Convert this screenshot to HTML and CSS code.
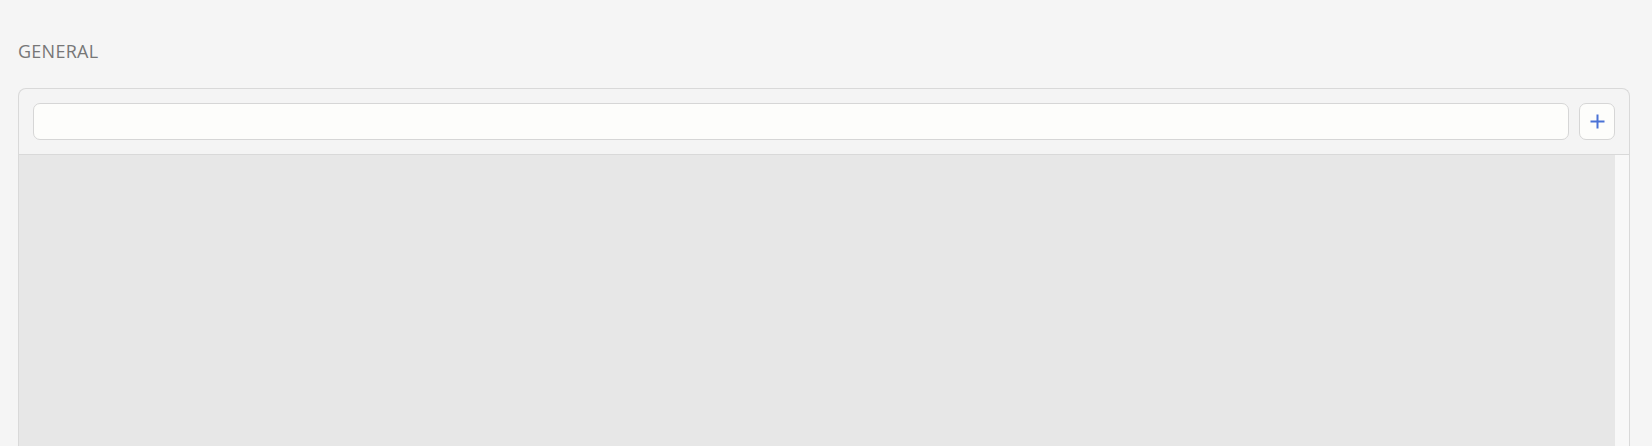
FILE: index.html
```html
<!DOCTYPE html>
<html lang="en">
<head>
    <meta charset="UTF-8">
    <meta name="viewport" content="width=device-width, initial-scale=1.0">
    <title>General</title>
    <link rel="stylesheet" href="styles.css">
</head>
<body>
    <main class="page">
        <h2 class="section-title">GENERAL</h2>

        <section class="panel">
            <div class="panel-header">
                <input type="text" class="search-input" aria-label="Name">
                <button type="button" class="add-button" aria-label="Add">
                    <svg width="15" height="15" viewBox="0 0 15 15">
                        <path d="M7.5 0.5v14M0.5 7.5h14" stroke="#4a72d6" stroke-width="2" fill="none"/>
                    </svg>
                </button>
            </div>
            <div class="panel-body">
                <div class="list-area"></div>
                <div class="scroll-track"></div>
            </div>
        </section>
    </main>
</body>
</html>
```

FILE: styles.css
```css
html, body {
    height: 100%;
}

body {
    font-family: "Open Sans", "Noto Sans", Arial, sans-serif;
    margin: 0;
    padding: 0;
    background-color: #f5f5f5;
    overflow: hidden;
}

.page {
    padding: 39px 22px 0 18px;
    display: flex;
    flex-direction: column;
    height: 100%;
    box-sizing: border-box;
}

.section-title {
    margin: 0 0 25px 0;
    font-size: 18px;
    line-height: 24px;
    font-weight: 400;
    letter-spacing: 0.25px;
    color: #777777;
}

.panel {
    flex: 1;
    display: flex;
    flex-direction: column;
    background: #f4f4f4;
    border: 1px solid #d9d9d9;
    border-bottom: none;
    border-radius: 8px 8px 0 0;
    min-height: 420px;
}

.panel-header {
    display: flex;
    align-items: center;
    gap: 10px;
    padding: 14px;
    border-bottom: 1px solid #d9d9d9;
}

.search-input {
    flex: 1;
    height: 37px;
    box-sizing: border-box;
    border: 1px solid #d6d6d6;
    border-radius: 7px;
    background: #fdfdfb;
    padding: 0 10px;
    font-size: 14px;
    outline: none;
}

.add-button {
    width: 36px;
    height: 37px;
    box-sizing: border-box;
    border: 1px solid #d6d6d6;
    border-radius: 7px;
    background: #fdfdfb;
    padding: 0;
    display: flex;
    align-items: center;
    justify-content: center;
    cursor: pointer;
}

.panel-body {
    flex: 1;
    display: flex;
}

.list-area {
    flex: 1;
    background: #e7e7e7;
}

.scroll-track {
    width: 14px;
    background: #f8f8f8;
}
```
